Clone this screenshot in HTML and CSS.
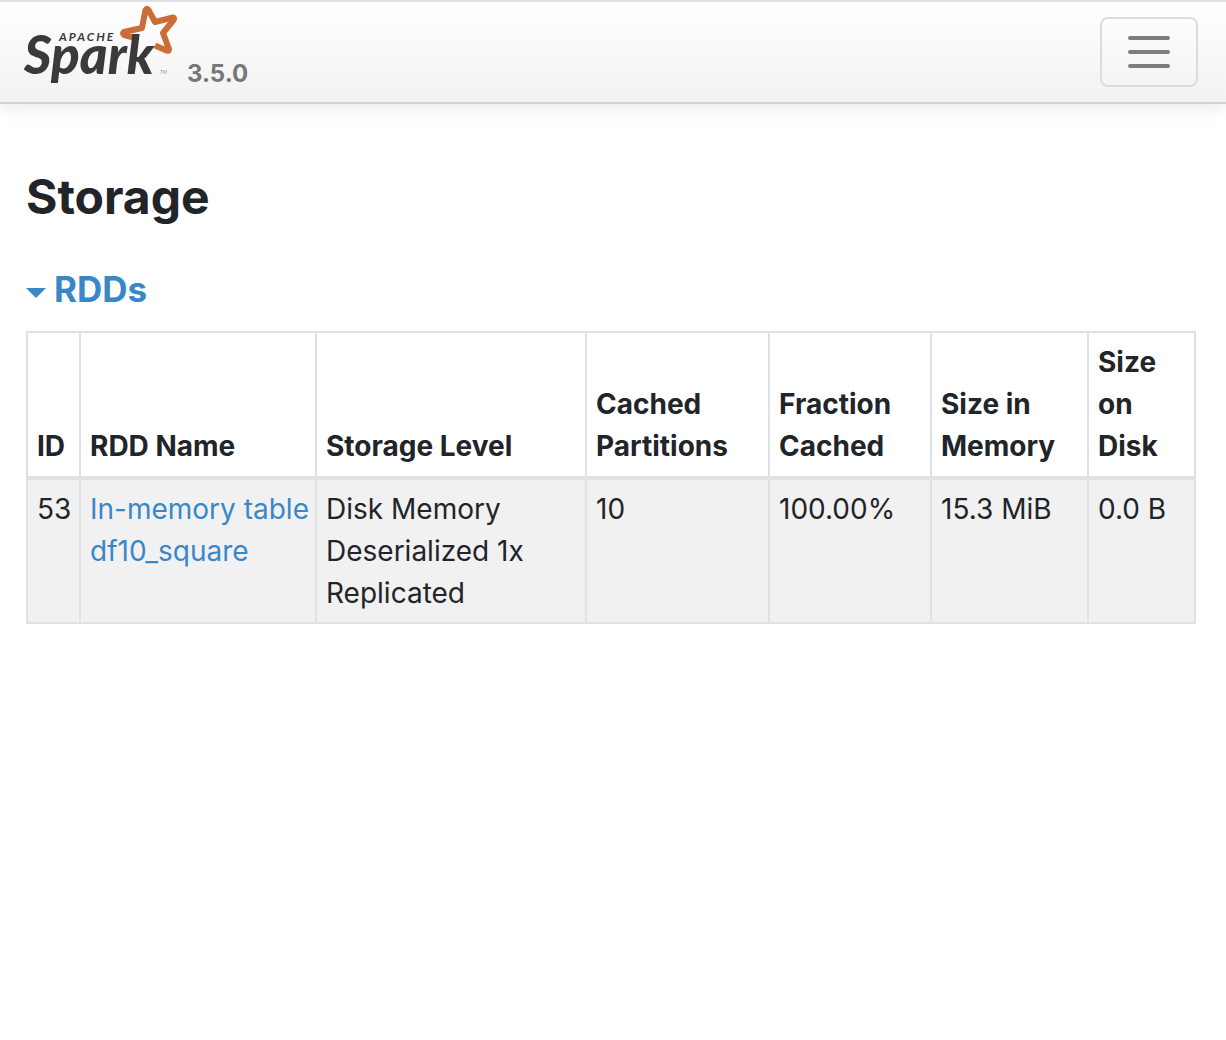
FILE: index.html
```html
<!DOCTYPE html>
<html lang="en">
<head>
    <meta charset="UTF-8">
    <meta name="viewport" content="width=device-width, initial-scale=1.0">
    <title>Storage</title>
    <link rel="stylesheet" href="styles.css">
</head>
<body>
    <nav class="navbar">
        <a class="brand" href="#">
            <svg class="logo" viewBox="0 0 154 84" role="img" aria-label="Apache Spark">
                <path class="star" d="M112 35 L100 32 Q98 30 100 29 L118 25 L121.500 7 Q123 4.500 124.500 7 L131 19 L149 14.500 Q151 15 149.500 17 L139 30 L145 46 Q145 48.500 142.500 47.500 L131 42.500"/>
                <text class="logo-small" x="35" y="38">APACHE</text>
                <text class="logo-name" x="0" y="71">Spark</text>
                <text class="logo-tm" x="136" y="71">TM</text>
            </svg>
            <span class="version">3.5.0</span>
        </a>
        <button class="toggler" type="button" aria-label="Toggle navigation">
            <svg class="toggler-icon" viewBox="0 0 60 60">
                <path d="M10 15h38M10 29h38M10 43h38"/>
            </svg>
        </button>
    </nav>

    <main class="container">
        <h3 class="page-title">Storage</h3>
        <h4 class="section-title"><a href="#rdds"><span class="arrow"></span>RDDs</a></h4>

        <table class="table" id="rdds">
            <colgroup>
                <col class="col-id">
                <col class="col-name">
                <col class="col-level">
                <col class="col-partitions">
                <col class="col-fraction">
                <col class="col-memory">
                <col class="col-disk">
            </colgroup>
            <thead>
                <tr>
                    <th>ID</th>
                    <th>RDD Name</th>
                    <th>Storage Level</th>
                    <th>Cached Partitions</th>
                    <th>Fraction Cached</th>
                    <th>Size in Memory</th>
                    <th>Size on Disk</th>
                </tr>
            </thead>
            <tbody>
                <tr>
                    <td>53</td>
                    <td><a href="#">In-memory table df10_square</a></td>
                    <td>Disk Memory Deserialized 1x Replicated</td>
                    <td>10</td>
                    <td>100.00%</td>
                    <td>15.3 MiB</td>
                    <td>0.0 B</td>
                </tr>
            </tbody>
        </table>
    </main>
</body>
</html>
```
FILE: styles.css
```css
* {
    box-sizing: border-box;
}

body {
    margin: 0;
    background-color: #fff;
    color: #212529;
    font-family: Inter, "Liberation Sans", sans-serif;
    font-size: 28px;
    line-height: 42px;
}

a {
    color: #3a87c8;
    text-decoration: none;
}

/* Navbar */
.navbar {
    display: flex;
    align-items: center;
    justify-content: space-between;
    height: 104px;
    padding: 0 28px 0 24px;
    border-top: 2px solid #e0e0e0;
    border-bottom: 2px solid #d4d4d4;
    background-image: linear-gradient(#fff, #f2f2f2);
    box-shadow: 0 2px 20px rgba(0, 0, 0, 0.1);
}

.brand {
    display: flex;
    align-items: flex-end;
    gap: 9px;
    height: 84px;
    margin-bottom: 14px;
}

.logo {
    width: 154px;
    height: 84px;
}

.star {
    fill: none;
    stroke: #cb6d37;
    stroke-width: 6;
    stroke-linejoin: round;
}

.logo text {
    fill: #3c3a38;
    font-family: Lato, sans-serif;
    font-style: italic;
}

.logo .logo-name {
    font-size: 53px;
    font-weight: 900;
}

.logo .logo-small {
    font-size: 12px;
    font-weight: 700;
    letter-spacing: 2px;
}

.logo .logo-tm {
    fill: #999;
    font-size: 5px;
}

.version {
    color: #777;
    font-size: 24px;
    font-weight: 700;
    line-height: 26px;
}

.toggler {
    width: 98px;
    height: 70px;
    padding: 4px 18px;
    border: 2px solid #dcdcdc;
    border-radius: 8px;
    background-color: transparent;
}

.toggler-icon {
    display: block;
    width: 60px;
    height: 60px;
}

.toggler-icon path {
    stroke: #7d7d7d;
    stroke-width: 4;
    stroke-linecap: round;
}

/* Page content */
.container {
    padding: 64px 30px 0 26px;
}

.page-title {
    margin: 0;
    font-size: 48px;
    font-weight: 700;
    line-height: 58px;
}

.section-title {
    margin: 42px 0 20px;
    font-size: 35px;
    font-weight: 700;
    line-height: 43px;
}

.arrow {
    display: inline-block;
    margin-right: 8px;
    border-top: 10px solid;
    border-right: 10px solid transparent;
    border-left: 10px solid transparent;
    vertical-align: 4px;
}

/* RDD table */
.table {
    width: 100%;
    border-collapse: collapse;
    table-layout: fixed;
}

.table th,
.table td {
    padding: 8px 4px 8px 9px;
    border: 2px solid #dee2e6;
    text-align: left;
    vertical-align: top;
}

.table th {
    padding-bottom: 9px;
    border-bottom-width: 4px;
    vertical-align: bottom;
}

.table tbody tr {
    background-color: #f1f1f1;
}

.col-id { width: 53px; }
.col-name { width: 236px; }
.col-level { width: 270px; }
.col-partitions { width: 183px; }
.col-fraction { width: 162px; }
.col-memory { width: 157px; }
```
